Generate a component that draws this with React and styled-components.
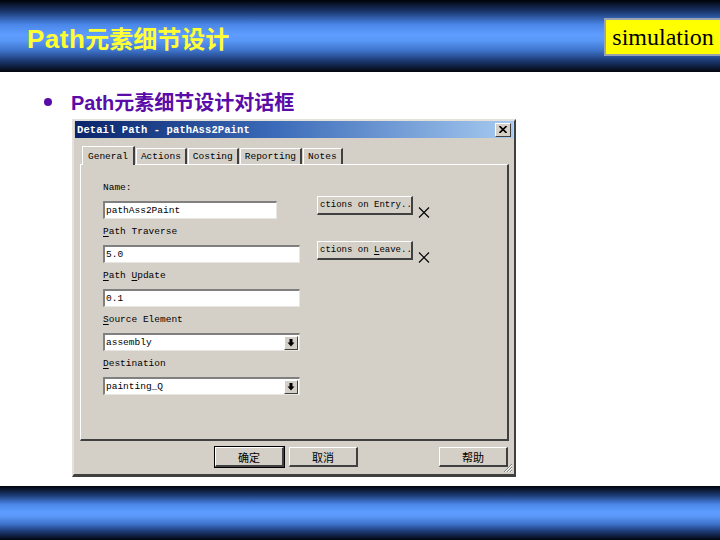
import React from 'react'
import styled, { createGlobalStyle } from 'styled-components'

const Global = createGlobalStyle`
html, body {
  margin: 0;
  padding: 0;
  background: #ffffff;
}
body {
  width: 720px;
  height: 540px;
  overflow: hidden;
  font-family: 'Liberation Sans', 'Noto Sans CJK SC', sans-serif;
}`

const band = `linear-gradient(180deg, #000308 0%, #1c3a74 17%, #4a86e8 34%, #5d9dff 48%, #5a98f8 56%, #3e74cc 70%, #1c3a74 84%, #02060f 100%)`

const Slide = styled.div`
display: flex;
flex-direction: column;
width: 720px;
height: 540px;`

const Header = styled.div`
height: 72px;
flex-shrink: 0;
display: flex;
align-items: center;
justify-content: space-between;
padding-left: 27px;
background: ${band};`

const SlideTitle = styled.div`
color: #ffff33;
font-family: 'Liberation Sans', 'Noto Sans CJK SC', sans-serif;
font-weight: bold;
font-size: 24px;
padding-top: 2px;`

const Latin = styled.span`
font-size: 26px;
letter-spacing: 0.5px;`

const Tag = styled.div`
width: 114px;
height: 34px;
margin-top: 2px;
background: #ffff00;
border: 2px solid #9aa3b0;
border-right: none;
display: flex;
align-items: center;
justify-content: center;
font-family: 'Liberation Serif', serif;
font-size: 24px;
color: #000;`

const Main = styled.div`
flex: 1;
display: flex;
flex-direction: column;`

const Bullet = styled.div`
display: flex;
align-items: center;
height: 24px;
margin-top: 17px;
margin-left: 44px;
color: #5a0ca8;
font-weight: bold;
font-size: 20px;
font-family: 'Liberation Sans', 'Noto Sans CJK SC', sans-serif;`

const Dot = styled.span`
width: 8px;
height: 8px;
border-radius: 50%;
background: #5a0ca8;
margin-right: 19px;
margin-top: 1px;`

const Dialog = styled.div`
position: relative;
box-sizing: border-box;
width: 444px;
height: 358px;
margin-top: 6px;
margin-left: 72px;
background: #d4d0c8;
border-top: 2px solid #e4e1da;
border-left: 2px solid #e4e1da;
border-right: 2px solid #404040;
border-bottom: 3px solid #404040;
display: flex;
flex-direction: column;
font-family: 'Liberation Mono', 'DejaVu Sans Mono', monospace;
font-size: 9.5px;
color: #000;`

const TitleBar = styled.div`
height: 17px;
margin: 0 1px 0 1px;
display: flex;
align-items: center;
justify-content: space-between;
padding: 0 2px 0 2px;
background: linear-gradient(90deg, #0a246a 0%, #3a6ab8 45%, #a6caf0 100%);`

const TitleText = styled.span`
color: #fff;
font-weight: bold;
font-size: 10.5px;
letter-spacing: 0.1px;`

const CloseBtn = styled.div`
box-sizing: border-box;
width: 16px;
height: 14px;
background: #d4d0c8;
border-top: 1px solid #fff;
border-left: 1px solid #fff;
border-right: 1px solid #404040;
border-bottom: 1px solid #404040;
display: flex;
align-items: center;
justify-content: center;`

const Tabs = styled.div`
display: flex;
align-items: flex-end;
margin: 7px 0 0 8px;
height: 19px;`

const Tab = styled.div`
box-sizing: border-box;
height: ${p => (p.$active ? '19px' : '16px')};
padding: 0 ${p => (p.$active ? '5px' : '4px')};
margin-right: 1px;
display: flex;
align-items: center;
border-top: 1px solid #fff;
border-left: 1px solid #fff;
border-right: 2px solid #404040;
background: #d4d0c8;
position: relative;
z-index: ${p => (p.$active ? 1 : 0)};
margin-bottom: ${p => (p.$active ? '-1px' : '0')};`

const Panel = styled.div`
box-sizing: border-box;
width: 429px;
height: 277px;
margin-left: 6px;
border-top: 1px solid #fff;
border-left: 1px solid #fff;
border-right: 2px solid #404040;
border-bottom: 2px solid #404040;
display: flex;
padding: 16px 0 0 22px;
gap: 17px;`

const Fields = styled.div`
display: flex;
flex-direction: column;
width: 197px;`

const Label = styled.div`
height: 14px;
line-height: 14px;
white-space: pre;
margin-bottom: 6px;`

const Key = styled.u`
text-underline-offset: 2px;`

const Input = styled.div`
box-sizing: border-box;
width: ${p => p.$w || 197}px;
height: 18px;
margin-bottom: 6px;
background: #fff;
border-top: 2px solid #808080;
border-left: 2px solid #808080;
border-right: 1px solid #e8e6e0;
border-bottom: 1px solid #e8e6e0;
display: flex;
align-items: center;
justify-content: space-between;
padding-left: 1px;`

const DropBtn = styled.div`
box-sizing: border-box;
width: 14px;
height: 14px;
margin-right: 1px;
background: #d4d0c8;
border-top: 1px solid #fff;
border-left: 1px solid #fff;
border-right: 1px solid #404040;
border-bottom: 1px solid #404040;
display: flex;
align-items: center;
justify-content: center;`

const Side = styled.div`
display: flex;
flex-direction: column;
gap: 26px;
padding-top: 15px;`

const SideRow = styled.div`
display: flex;
align-items: flex-end;`

const Button = styled.div`
box-sizing: border-box;
width: ${p => p.$w || 96}px;
height: ${p => p.$h || 19}px;
background: #d4d0c8;
border-top: 1px solid #fff;
border-left: 1px solid #fff;
border-right: 2px solid #404040;
border-bottom: 2px solid #404040;
outline: ${p => (p.$default ? '1px solid #000' : 'none')};
display: flex;
align-items: center;
justify-content: ${p => (p.$cjk ? 'center' : 'flex-start')};
padding-left: ${p => (p.$cjk ? '0' : '2px')};
overflow: hidden;
white-space: pre;
font-family: ${p => (p.$cjk ? "'Noto Sans CJK SC', sans-serif" : 'inherit')};
font-size: ${p => (p.$cjk ? '11px' : '9px')};
margin-left: ${p => (p.$push ? 'auto' : '0')};`

const Cross = styled.svg`
margin: 0 0 -3px 5px;`

const Footer = styled.div`
display: flex;
align-items: center;
gap: 5px;
margin: 6px 6px 0 141px;`

const Grip = styled.svg`
position: absolute;
right: 1px;
bottom: 1px;`

const Band = styled.div`
height: 54px;
flex-shrink: 0;
background: ${band};`

const X = () => (
  <Cross width="12" height="11" viewBox="0 0 12 11">
    <path d="M1 0.5 L11 10.5 M11 0.5 L1 10.5" stroke="#000" strokeWidth="1.1" />
  </Cross>
)

const Arrow = () => (
  <svg width="8" height="8" viewBox="0 0 8 8">
    <path d="M2.5 0 H5.5 V3.5 H7.5 L4 7.5 L0.5 3.5 H2.5 Z" fill="#000" />
  </svg>
)

const App = () => {
  return (
    <>
      <Global />
      <Slide>
        <Header>
          <SlideTitle><Latin>Path</Latin>元素细节设计</SlideTitle>
          <Tag>simulation</Tag>
        </Header>
        <Main>
          <Bullet>
            <Dot />
            Path元素细节设计对话框
          </Bullet>
          <Dialog>
            <TitleBar>
              <TitleText>Detail Path - pathAss2Paint</TitleText>
              <CloseBtn>
                <svg width="8" height="7" viewBox="0 0 8 7">
                  <path d="M0.5 0 L7.5 7 M7.5 0 L0.5 7" stroke="#000" strokeWidth="1.6" />
                </svg>
              </CloseBtn>
            </TitleBar>
            <Tabs>
              <Tab $active>General</Tab>
              <Tab>Actions</Tab>
              <Tab>Costing</Tab>
              <Tab>Reporting</Tab>
              <Tab>Notes</Tab>
            </Tabs>
            <Panel>
              <Fields>
                <Label>Name:</Label>
                <Input $w={174}>pathAss2Paint</Input>
                <Label><Key>P</Key>ath Traverse</Label>
                <Input>5.0</Input>
                <Label><Key>P</Key>ath <Key>U</Key>pdate</Label>
                <Input>0.1</Input>
                <Label><Key>S</Key>ource Element</Label>
                <Input>
                  assembly
                  <DropBtn><Arrow /></DropBtn>
                </Input>
                <Label><Key>D</Key>estination</Label>
                <Input>
                  painting_Q
                  <DropBtn><Arrow /></DropBtn>
                </Input>
              </Fields>
              <Side>
                <SideRow>
                  <Button><span>ctions on Entry..</span></Button>
                  <X />
                </SideRow>
                <SideRow>
                  <Button><span>ctions on <Key>L</Key>eave..</span></Button>
                  <X />
                </SideRow>
              </Side>
            </Panel>
            <Footer>
              <Button $w={69} $h={20} $cjk $default>确定</Button>
              <Button $w={69} $h={20} $cjk>取消</Button>
              <Button $w={69} $h={20} $cjk $push>帮助</Button>
            </Footer>
            <Grip width="11" height="11" viewBox="0 0 11 11">
              <path d="M10 2 L2 10 M10 5 L5 10 M10 8 L8 10" stroke="#808080" strokeWidth="1" />
              <path d="M10 3 L3 10 M10 6 L6 10 M10 9 L9 10" stroke="#fff" strokeWidth="1" />
            </Grip>
          </Dialog>
        </Main>
        <Band />
      </Slide>
    </>
  )
}

export default App
